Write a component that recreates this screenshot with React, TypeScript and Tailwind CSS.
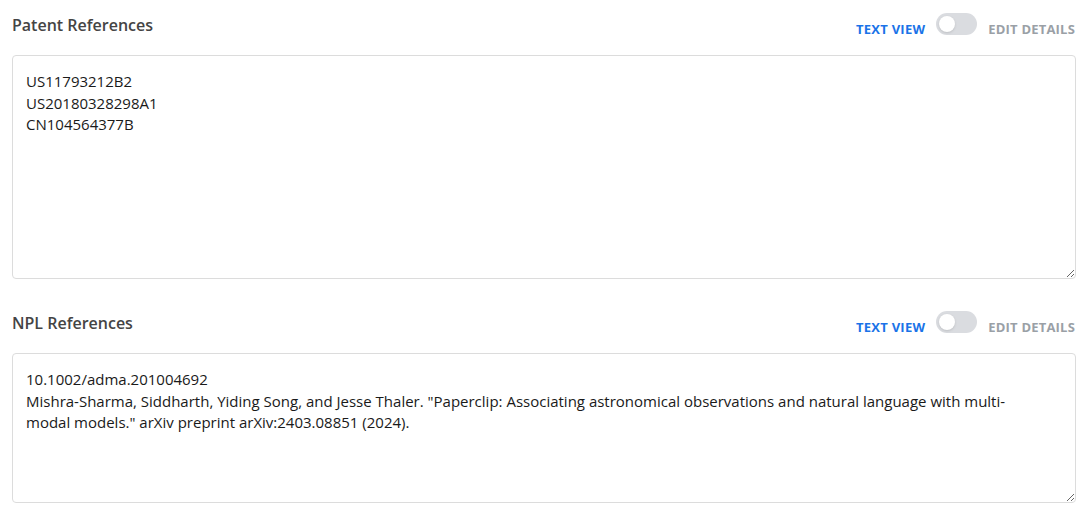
import { useState } from "react";

function Toggle() {
  return (
    <div className="flex items-start">
      <span className="mt-[9px] text-[13px] leading-[14px] font-bold tracking-[0.25px] text-[#1a73e8]">TEXT VIEW</span>
      <span className="relative ml-[11px] inline-block h-[22px] w-[41px] rounded-full bg-[#dadce0]">
        <span className="absolute left-[3px] top-[3px] h-[16px] w-[16px] rounded-full bg-white shadow-sm" />
      </span>
      <span className="ml-[11px] mt-[9px] mr-[1px] text-[13px] leading-[14px] font-bold tracking-[0.2px] text-[#9aa0a6]">
        EDIT DETAILS
      </span>
    </div>
  );
}

function RefSection({ title, value, height }: { title: string; value: string; height: string }) {
  const [text, setText] = useState(value);
  return (
    <section>
      <div className="flex items-start justify-between">
        <h2 className="text-[16px] leading-[25px] font-semibold text-[#444]">{title}</h2>
        <Toggle />
      </div>
      <textarea
        value={text}
        onChange={(e) => setText(e.target.value)}
        className={`mt-[17px] block w-full resize-y rounded-[4px] border border-[#dcdcdc] pl-[13px] pr-[30px] pt-[15px] text-[15px] leading-[21.5px] text-[#1a1a1a] outline-none ${height}`}
      />
    </section>
  );
}

export default function App() {
  return (
    <div className="flex flex-col gap-[32px] bg-white pl-[12px] pr-[13px] pt-[13px] font-['Open_Sans',sans-serif]">
      <RefSection
        title="Patent References"
        value={"US11793212B2\nUS20180328298A1\nCN104564377B"}
        height="h-[224px]"
      />
      <RefSection
        title="NPL References"
        value={
          '10.1002/adma.201004692\nMishra-Sharma, Siddharth, Yiding Song, and Jesse Thaler. "Paperclip: Associating astronomical observations and natural language with multi-modal models." arXiv preprint arXiv:2403.08851 (2024).'
        }
        height="h-[150px]"
      />
    </div>
  );
}
